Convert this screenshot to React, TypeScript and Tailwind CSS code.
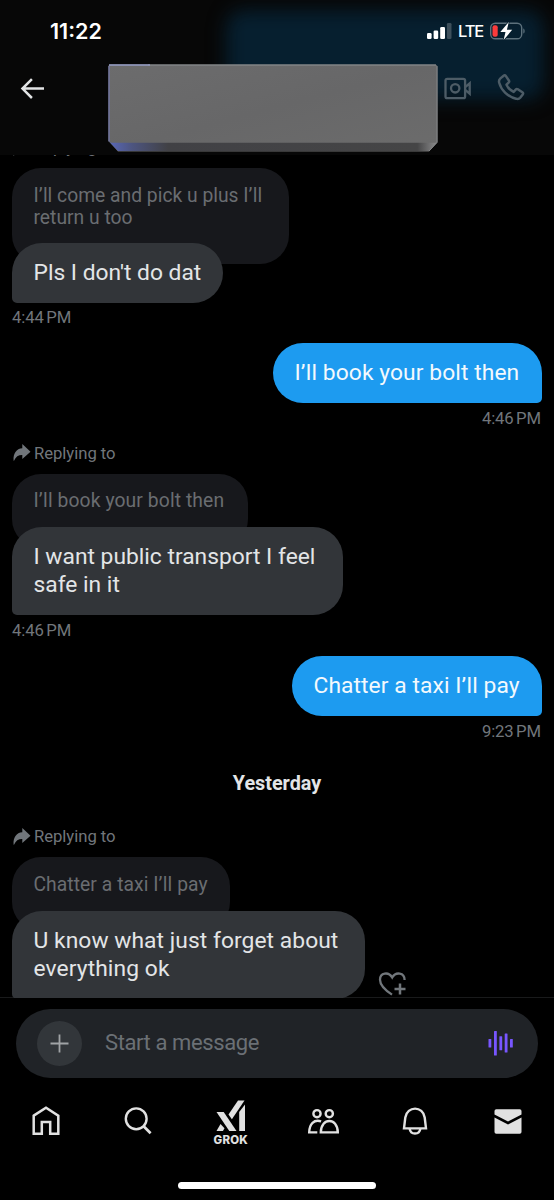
import type { ReactNode } from "react";

function StatusBar() {
  return (
    <div className="flex h-[62px] items-center justify-between pl-[50px] pr-[28px]">
      <span className="text-[21.5px] font-semibold leading-6 tracking-[0px] text-white font-[Inter,sans-serif]">11:22</span>
      <div className="flex items-center">
        <svg className="h-4 w-[25px]" viewBox="0 0 25 16">
          <rect x="0" y="10" width="4.6" height="6" rx="1.3" fill="#fff" />
          <rect x="6.6" y="7.5" width="4.6" height="8.5" rx="1.3" fill="#fff" />
          <rect x="13.2" y="4" width="4.8" height="12" rx="1.3" fill="#fff" />
          <rect x="19.9" y="0" width="4.6" height="16" rx="1.3" fill="#3d4f5b" />
        </svg>
        <span className="ml-[6px] mr-[7px] w-[25px] text-[16.5px] font-medium leading-5 tracking-[-1.1px] text-white font-[Inter,sans-serif]">LTE</span>
        <svg className="h-[18px] w-[36px]" viewBox="0 0 36 18">
          <rect x="0.7" y="1.2" width="31" height="15.6" rx="4.6" fill="none" stroke="#5d717c" strokeWidth="1.4" />
          <path d="M33.3 6.4c1.8.6 1.8 4.6 0 5.2z" fill="#5d717c" />
          <rect x="2.5" y="3.2" width="5.2" height="11.6" rx="2" fill="#fb3b3b" />
          <path d="M18.800 0 10.300 10h5.200l-1.900 8L22.200 7.800h-5.300z" fill="#fff" stroke="#07202e" strokeWidth="1.600" paintOrder="stroke" strokeLinejoin="round" />
        </svg>
      </div>
    </div>
  );
}

function NameBlock() {
  return (
    <svg className="h-[88px] w-[330px]" viewBox="0 0 330 88">
      <defs>
        <linearGradient id="face" x1="0" y1="0" x2="1" y2="1">
          <stop offset="0" stopColor="#6c6c6d" />
          <stop offset="0.5" stopColor="#676768" />
          <stop offset="1" stopColor="#6c6c6c" />
        </linearGradient>
        <linearGradient id="bevel">
          <stop offset="0" stopColor="#5968b8" />
          <stop offset="0.07" stopColor="#4d5580" />
          <stop offset="0.18" stopColor="#414145" />
          <stop offset="0.94" stopColor="#454546" />
          <stop offset="1" stopColor="#8c8c8d" />
        </linearGradient>
      </defs>
      <path d="M2 0.500H327.500Q329.500 1 329.500 3V78L321 87.500H10L0.500 77V2.500Q0.500 0.500 2 0.500Z" fill="url(#face)" />
      <path d="M1 77.500 10 87H321L329 78.500 327 78.800H3Z" fill="url(#bevel)" />
      <path d="M40 1H328" stroke="#8e9294" strokeWidth="1.200" />
      <path d="M1 1H42" stroke="#959dc4" strokeWidth="1.300" />
      <path d="M1 2V77.500" stroke="#7378a8" strokeWidth="1.300" />
      <path d="M329 2V78.500L321 87" fill="none" stroke="#858789" strokeWidth="1" />
    </svg>
  );
}

function Header() {
  return (
    <header className="relative z-10 h-[155px] shrink-0 overflow-hidden bg-[#070707]">
      <div className="absolute left-[226px] top-[10px] h-[90px] w-[318px] rounded-[18px] bg-[#061f2f] blur-[9px]" />
      <div className="relative">
        <StatusBar />
        <div className="flex pt-[2px]">
          <svg className="ml-[20px] mt-[14px] h-[22px] w-[26px]" viewBox="0 0 26 22" fill="none" stroke="#e2e4e5" strokeWidth="2.500">
            <path d="M24 10.600H2.500M11.900 1.200 2.500 10.600l9.400 9.400" />
          </svg>
          <div className="ml-[62px]"><NameBlock /></div>
          <svg className="ml-[6px] mt-[13px] h-[23px] w-[28px]" viewBox="0 0 28 23" fill="none" stroke="#4d5c66" strokeWidth="2.300">
            <rect x="1.500" y="1.800" width="19.600" height="19.400" rx="1.800" />
            <circle cx="11.200" cy="11.300" r="4.200" />
            <path d="M21.500 9.800 25.700 6.300v10.400L21.500 13.200" />
          </svg>
          <svg className="ml-[25px] mt-[9.500px] h-[28px] w-[28px]" viewBox="0 0 29.500 29.500" fill="none" stroke="#4d5c66" strokeWidth="2.600" strokeLinejoin="round">
            <path d="M3.600 4.600 7 1.800c.9-.7 1.800-.5 2.400.4l3.100 4.600c.5.800.4 1.700-.3 2.300L10 11.300c1.500 3.300 4 5.900 7.500 7.600l2.200-2.500c.6-.7 1.500-.8 2.300-.3l4.700 3.200c.8.6 1 1.500.4 2.300l-2.700 3.400c-1 1.200-2.700 1.600-4.300 1C11.500 24.100 4.400 17 2.300 9.200c-.5-1.900-.1-3.400 1.300-4.600z" />
          </svg>
        </div>
      </div>
    </header>
  );
}

function ReplyingTo() {
  return (
    <div className="flex h-[42px] shrink-0 items-center text-[#71767b]">
      <svg className="ml-[1px] h-[17px] w-[18px] shrink-0" viewBox="0 0 18 17" fill="currentColor">
        <path d="M9.300 0 17.500 7.700 9.300 15.100V11C5.500 10.900 2.800 12.600 1 16.700H.6C0 9.500 3.400 4.700 9.300 4.300Z" />
      </svg>
      <span className="ml-[3px] mt-[2px] whitespace-nowrap text-[16.7px] leading-5 tracking-[-0.05px]">Replying to</span>
    </div>
  );
}

function Quote({ children, className }: { children: ReactNode; className: string }) {
  return (
    <div className={`shrink-0 whitespace-nowrap rounded-[29px] bg-[#17181c] pb-[35.5px] pl-[21.5px] pt-[16.5px] text-[19.3px] leading-[22px] text-[#6a6d71] ${className}`}>
      {children}
    </div>
  );
}

function Received({ children, className }: { children: ReactNode; className: string }) {
  return (
    <div className={`relative shrink-0 whitespace-nowrap rounded-[30px] rounded-bl-[5px] bg-[#323539] pb-[16px] pl-[21.5px] pt-[16px] text-[22.8px] leading-[28px] text-[#e3e5e7] ${className}`}>
      {children}
    </div>
  );
}

function Sent({ children, className }: { children: ReactNode; className: string }) {
  return (
    <div className={`shrink-0 self-end whitespace-nowrap rounded-[30px] rounded-br-[5px] bg-[#1d9bf0] py-[16px] pl-[21.5px] text-[22.8px] leading-[28px] text-[#f3f9fd] ${className}`}>
      {children}
    </div>
  );
}

function Time({ children, right }: { children: string; right?: boolean }) {
  return (
    <div className={`h-[28.4px] shrink-0 pt-[5.4px] text-[16.7px] leading-5 tracking-[-0.1px] [word-spacing:-1.6px] text-[#71767b] ${right ? "self-end pr-px" : ""}`}>
      {children}
    </div>
  );
}

function Chat() {
  return (
    <main className="flex h-[843px] shrink-0 flex-col items-start overflow-hidden px-[12px]">
      <div className="-mt-[29px]"><ReplyingTo /></div>
      <Quote className="w-[277px]">
        <span>I’ll come and pick u plus I’ll</span>
        <br />
        <span>return u too</span>
      </Quote>
      <Received className="-mt-[21px] w-[211px]">Pls I don't do dat</Received>
      <Time>4:44 PM</Time>
      <Sent className="mt-[12px] w-[269px]"><span className="tracking-[0.09px]">I’ll book your bolt then</span></Sent>
      <Time right>4:46 PM</Time>
      <ReplyingTo />
      <Quote className="w-[235.5px]"><span className="tracking-[0.1px]">I’ll book your bolt then</span></Quote>
      <Received className="-mt-[20.500px] w-[330.5px]">
        <span>I want public transport I feel</span>
        <br />
        <span>safe in it</span>
      </Received>
      <Time>4:46 PM</Time>
      <Sent className="mt-[12.5px] w-[250px]"><span className="tracking-[0.08px]">Chatter a taxi I’ll pay</span></Sent>
      <Time right>9:23 PM</Time>
      <div className="h-[70.9px] shrink-0 self-center pt-[28.5px] text-[19.8px] font-bold leading-[22px] text-[#e3e5e7]">Yesterday</div>
      <ReplyingTo />
      <Quote className="w-[218px]"><span className="tracking-[0.06px]">Chatter a taxi I’ll pay</span></Quote>
      <div className="-mt-[20.500px] flex items-end">
        <Received className="w-[353px]">
          <span className="tracking-[0.06px]">U know what just forget about</span>
          <br />
          <span className="tracking-[0.1px]">everything ok</span>
        </Received>
        <svg className="mb-[2px] ml-[13px] h-[26px] w-[29px]" viewBox="0 0 29 26" fill="none" stroke="#71767b" strokeWidth="2.300">
          <path d="M14 23.600C7.500 19.300 2 14.300 2 8.700 2 1.600 10.500.3 14.200 6.500 17.800.3 26.600 1.500 26.600 9" />
          <path d="M22 12.500v11M16.500 18h11" strokeWidth="2.500" />
        </svg>
      </div>
    </main>
  );
}

function Composer() {
  return (
    <div className="mx-[16px] mt-[10.5px] flex h-[69.5px] shrink-0 items-center rounded-full bg-[#202327]">
      <div className="ml-[21px] flex size-[45px] items-center justify-center rounded-full bg-[#32363a]">
        <svg className="size-[19px]" viewBox="0 0 19 19" stroke="#a0a3a6" strokeWidth="1.800">
          <path d="M9.500 0.500v18M0.500 9.500h18" />
        </svg>
      </div>
      <span className="ml-[23px] whitespace-nowrap text-[22px] leading-7 tracking-[-0.4px] text-[#6b7075]">Start a message</span>
      <svg className="ml-auto mr-[24px] h-[26px] w-[26px]" viewBox="0 0 26 26" fill="#7856ff">
        <rect x="0.500" y="9" width="2.800" height="8.500" rx=".5" />
        <rect x="6" y="1" width="2.800" height="24.500" rx=".5" />
        <rect x="11.400" y="6.200" width="2.800" height="14" rx=".5" />
        <rect x="16.700" y="3.600" width="2.800" height="19" rx=".5" />
        <rect x="22" y="9" width="2.800" height="8.500" rx=".5" />
      </svg>
    </div>
  );
}

function TabBar() {
  return (
    <nav className="grid h-[87px] shrink-0 grid-cols-6 justify-items-center text-[#e1e1e1]">
      <svg className="mt-[28px] h-[29px] w-[28px]" viewBox="0 0 28 29" fill="none" stroke="currentColor" strokeWidth="2.500">
        <path d="M1.700 9.600 14 1.800l12.300 7.800V27.700h-8.100v-11.600H9.800v11.600H1.700Z" />
      </svg>
      <svg className="mt-[28px] h-[29px] w-[28px]" viewBox="0 0 28 29" fill="none" stroke="currentColor" strokeWidth="2.400">
        <circle cx="12.200" cy="12.800" r="10.400" />
        <path d="m19.600 20.200 7 7" strokeWidth="2.800" />
      </svg>
      <div className="flex flex-col items-center pt-[22px]">
        <svg className="h-[32px] w-[30px]" viewBox="0 0 30 32" fill="currentColor">
          <path d="M0.500 12h7.200L20.500 31h-7.200Z" />
          <path d="M4.500 24 8.500 28.300 6.900 31H.5Z" />
          <path d="M12.500 14.500 22 .5h6.500L15.900 19.300Z" />
          <path d="M23.200 12 29 4.500V31h-5.800Z" />
        </svg>
        <span className="mt-[2px] text-[11.500px] font-extrabold leading-3 tracking-[0.2px] font-[Inter,sans-serif]">GROK</span>
      </div>
      <svg className="mt-[29.5px] h-[26px] w-[32px]" viewBox="0 0 32 26" fill="none" stroke="currentColor" strokeWidth="2.400">
        <circle cx="10" cy="5.700" r="3.600" />
        <circle cx="22.300" cy="5.700" r="3.600" />
        <path d="M14.100 13.400C7 11 2.400 16 2.200 24.400h8.100" />
        <path d="M13.800 24.400c.4-15.200 16.700-15.200 17 0Z" />
      </svg>
      <svg className="mt-[28.5px] h-[29px] w-[26px]" viewBox="0 0 26 29" fill="none" stroke="currentColor" strokeWidth="2.400">
        <path d="M2 21.400 3.300 10.500C5-1.400 21.200-1.400 22.700 10.500L24 21.400Z" />
        <path d="M7.700 21.800c.8 6.200 9.800 6.200 10.600 0" />
      </svg>
      <svg className="mt-[30.500px] h-[25px] w-[28px]" viewBox="0 0 28 25" fill="currentColor">
        <path d="M.5 5.500V2Q.5.300 2.300.300H25.700Q27.500.300 27.500 2V5.500L14 12.500Z" />
        <path d="M.5 8.600 14 15.500 27.500 8.600V23Q27.500 24.700 25.700 24.700H2.300Q.5 24.700.5 23Z" />
      </svg>
    </nav>
  );
}

export default function App() {
  return (
    <div className="flex h-[1200px] w-[554px] flex-col overflow-hidden bg-black font-[Roboto,sans-serif]">
      <Header />
      <Chat />
      <footer className="-mt-px flex min-h-0 flex-1 flex-col border-t border-[#191a1b]">
        <Composer />
        <TabBar />
        <div className="mt-[17px] h-[7px] w-[198px] self-center rounded-full bg-white" />
      </footer>
    </div>
  );
}
